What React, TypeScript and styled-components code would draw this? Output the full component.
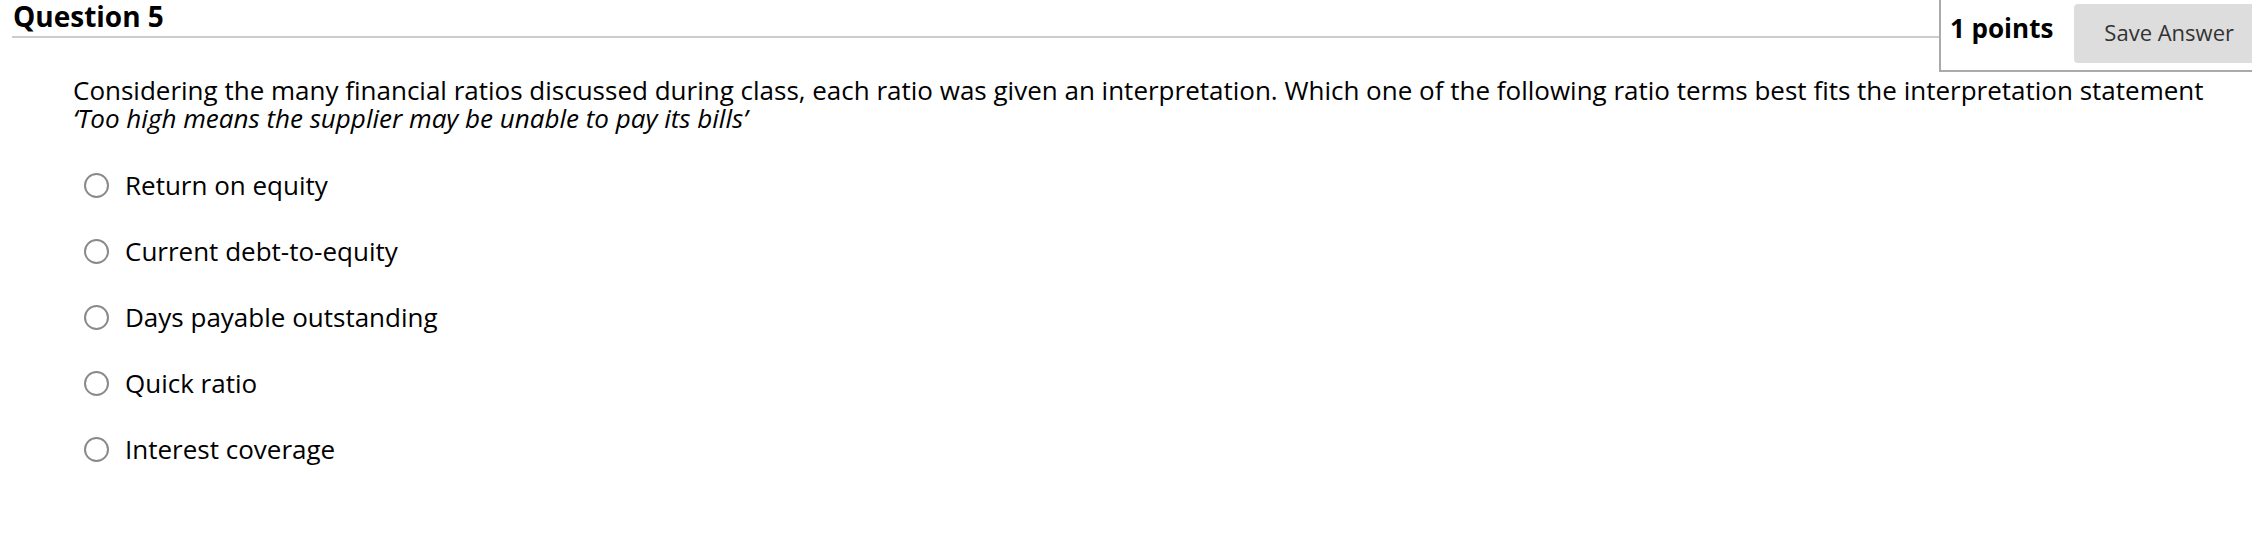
import React from 'react';
import styled, {createGlobalStyle} from "styled-components";

const GlobalStyle = createGlobalStyle`
  html, body {
    margin: 0;
    padding: 0;
    background: #fff;
    overflow: hidden;
  }
  body {
    font-family: "Open Sans", "Liberation Sans", sans-serif;
    color: #000;
  }
`

const options = [
    "Return on equity",
    "Current debt-to-equity",
    "Days payable outstanding",
    "Quick ratio",
    "Interest coverage",
]

export default function App() {
    return (
        <>
            <GlobalStyle/>
            <Page>
                <Header>
                    <Title>Question 5</Title>
                    <PointsBox>
                        <Points>1 points</Points>
                        <SaveButton type="button">Save Answer</SaveButton>
                    </PointsBox>
                </Header>
                <Content>
                    <QuestionText>
                        Considering the many financial ratios discussed during class, each ratio was given an
                        interpretation. Which one of the following ratio terms best fits the interpretation
                        statement <br/>
                        <em>‘Too high means the supplier may be unable to pay its bills’</em>
                    </QuestionText>
                    <OptionList>
                        {options.map((o) => (
                            <Option key={o}>
                                <Radio type="radio" name="q5"/>
                                <span>{o}</span>
                            </Option>
                        ))}
                    </OptionList>
                </Content>
            </Page>
        </>
    );
}

const Page = styled.div`
  box-sizing: border-box;
  width: 2264px;
  padding-left: 12px;
`
const Header = styled.div`
  display: flex;
  align-items: flex-start;
`
const Title = styled.h2`
  flex: 1;
  margin: 0;
  padding: 0 0 3px 1px;
  font-size: 28px;
  font-weight: 700;
  line-height: 33px;
  border-bottom: 2px solid #cccccc;
`
const PointsBox = styled.div`
  display: flex;
  align-items: flex-start;
  gap: 21px;
  height: 70px;
  padding-left: 9px;
  border-left: 2px solid #aaaaaa;
  border-bottom: 2px solid #aaaaaa;
`
const Points = styled.span`
  margin-top: 13px;
  font-size: 26px;
  font-weight: 700;
  line-height: 30px;
  white-space: nowrap;
`
const SaveButton = styled.button`
  margin-top: 4px;
  height: 59px;
  padding: 0 30px 4px;
  border: none;
  border-radius: 4px;
  background: #dddddd;
  color: #333;
  font-family: inherit;
  font-size: 22px;
  white-space: nowrap;
`
const Content = styled.div`
  padding: 4px 0 0 61px;
`
const QuestionText = styled.p`
  margin: 0;
  font-size: 26px;
  line-height: 28px;

  em {
    font-style: italic;
  }
`
const OptionList = styled.div`
  display: flex;
  flex-direction: column;
  gap: 33px;
  margin-top: 37px;
  padding-left: 11px;
`
const Option = styled.label`
  display: flex;
  align-items: center;
  gap: 16px;
  height: 33px;
  font-size: 26px;
  line-height: 33px;
`
const Radio = styled.input`
  appearance: none;
  flex-shrink: 0;
  margin: 0;
  width: 25px;
  height: 25px;
  border: 2px solid #8a8a8a;
  border-radius: 50%;
  background: #fff;
`
